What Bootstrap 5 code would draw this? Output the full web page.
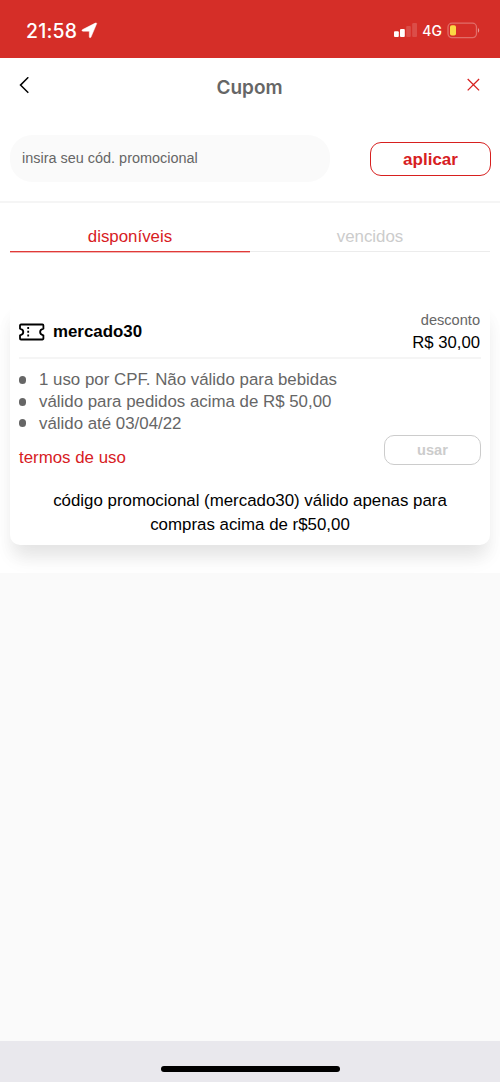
<!DOCTYPE html>
<html lang="pt-BR">
<head>
<meta charset="utf-8">
<meta name="viewport" content="width=device-width, initial-scale=1">
<title>Cupom</title>
<link href="https://cdn.jsdelivr.net/npm/bootstrap@5.3.0/dist/css/bootstrap.min.css" rel="stylesheet">
<style>
  body { font-family: "Liberation Sans", Arial, sans-serif; font-size: 16.87px; line-height: 21.8px; color: #000; background: #fafafa; height: 1082px; overflow: hidden; }
  .red { color: #d7201f; }
  .gray { color: #666; }
  .status { background: #d52e28; height: 58px; padding: 3px 20px 0 26px; font-family: Inter, sans-serif; color: #fff; }
  .clock { font-size: 19.4px; font-weight: 500; letter-spacing: .2px; padding-top: 2px; }
  .net { font-size: 14px; font-weight: 500; }
  .topbar { height: 77px; padding: 16px 20px 0 19px; }
  .topbar h1 { font: 600 19px/28px Inter, sans-serif; color: #666; padding-left: 3px; }
  .topbar svg { margin-top: 3px; }
  .promo { height: 68px; padding: 0 10px; border-bottom: 2px solid #f5f5f5; }
  .code-input.form-control { width: 320px; height: 47px; border: 0; border-radius: 22px; background: #fafafa; padding: 0 12px 1px; font-size: 14.45px; color: #666; }
  .code-input::placeholder { color: #666; opacity: 1; }
  .btn-apply { width: 121px; height: 34px; margin: 7px -1px 0 0; border: 1.5px solid #d7201f; border-radius: 11px; font-size: 17px; font-weight: 700; line-height: 32px; padding: 1px 0 0; color: #d7201f; }
  .tabs { height: 49px; margin: 0 10px; }
  .tabs .nav-link { padding: 23px 0 0; color: #ccc; border-bottom: 1px solid #ececec; border-radius: 0; transition: none; }
  .tabs .nav-link.active { color: #d7201f; border-bottom-color: #e03a38; box-shadow: 0 1px #f4b5b4; }
  .coupon { margin: 50px 10px 28px; height: 243px; padding: 8px 9px 0; border-radius: 10px; background: #fff; box-shadow: 0 16px 20px -4px rgba(0,0,0,.08), 0 12px 16px rgba(0,0,0,.035); }
  .coupon-head { height: 49px; border-bottom: 2px solid #f5f5f5; padding-right: 1px; }
  .code-group { padding-bottom: 3px; }
  .code-name { font-weight: 700; margin-left: 8px; }
  .value-label { font-size: 14.6px; }
  .value { font-size: 16.7px; }
  .rules { padding-top: 10px; }
  .rules li { display: flex; align-items: center; }
  .rules li::before { content: ""; width: 7px; height: 8px; border-radius: 4px; background: #666; margin-right: 13px; }
  .terms a { padding-top: 12.6px; }
  .btn-use { width: 97px; height: 30px; margin-top: 1px; border: 1px solid #ccc; border-radius: 10px; font-size: 14.6px; font-weight: 700; line-height: 29px; color: #ccc; padding: 0; }
  .note { line-height: 24px; margin-top: 20.4px; }
  .homebar { height: 41px; background: #e9e8ed; padding-bottom: 10px; }
  .homebar span { width: 179px; height: 6px; background: #000; }
</style>
</head>
<body class="d-flex flex-column">
<header class="status d-flex align-items-center justify-content-between">
  <div class="d-flex align-items-center">
    <span class="clock">21:58</span>
    <svg class="ms-1" width="17" height="17" viewBox="0 0 17 17"><path d="M15.600 1.800 10 15.100c-.5 1-1.700.7-1.700-.3V9.200H2c-1.200 0-1.400-1.200-.3-1.700L14.300 1.100c1-.4 1.600-.2 1.300.7Z" fill="#fff" stroke="#fff" stroke-width=".5"/></svg>
  </div>
  <div class="d-flex align-items-center">
    <svg width="24" height="15" viewBox="0 0 24 15" fill="#fff"><rect x="0" y="8.200" width="4.800" height="5.700" rx="1"/><rect x="6" y="5.900" width="4.800" height="8" rx="1"/><g opacity=".15"><rect x="12.200" y="2.900" width="4.600" height="11" rx="1"/><rect x="18.200" y="0" width="4.800" height="13.900" rx="1"/></g></svg>
    <span class="net ms-1">4G</span>
    <svg class="ms-1" width="34" height="17" viewBox="0 0 34 17"><rect x="2" y="1.200" width="28.500" height="14.400" rx="4" fill="none" stroke="#fff" stroke-opacity=".3" stroke-width="1.300"/><path d="M32 6c1.600.8 1.600 4 0 4.800Z" fill="#fff" opacity=".5"/><rect x="4" y="3.300" width="6" height="10.200" rx="1.800" fill="#fbd744"/></svg>
  </div>
</header>

<main class="bg-white">
  <div class="topbar d-flex justify-content-between">
    <svg width="11" height="18" viewBox="0 0 11 18" fill="none" stroke="#000" stroke-width="1.500"><path d="M9.300.3 1.500 8.100 9.300 15.800"/></svg>
    <h1 class="mb-0">Cupom</h1>
    <svg width="14" height="14" viewBox="0 0 14 14" fill="none" stroke="#d7201f" stroke-width="1.300"><path d="m1.700 2 11.400 11.400m0-11.400-11.400 11.400"/></svg>
  </div>
  <div class="promo d-flex justify-content-between align-items-start">
    <input class="form-control code-input" type="text" placeholder="insira seu cód. promocional" aria-label="Código promocional">
    <button class="btn btn-apply" type="button">aplicar</button>
  </div>
  <ul class="tabs nav nav-fill">
    <li class="nav-item w-50"><a class="nav-link active h-100" href="#">disponíveis</a></li>
    <li class="nav-item w-50"><a class="nav-link h-100" href="#">vencidos</a></li>
  </ul>
  <section class="coupon">
    <div class="coupon-head d-flex justify-content-between">
      <div class="code-group d-flex align-items-center">
        <svg width="26" height="18" viewBox="0 0 26 18" fill="none" stroke="#000" stroke-width="1.800" stroke-linejoin="round"><path d="M2 1.500h21.400a1 1 0 0 1 1 1v3.200c-4.400 1.100-4.400 5.500 0 6.600v3.200a1 1 0 0 1-1 1H2a1 1 0 0 1-1-1v-3.200c4.400-1.100 4.400-5.500 0-6.600V2.500a1 1 0 0 1 1-1Z"/><path d="M9.200 4v11" stroke-dasharray="2 1.800"/></svg>
        <span class="code-name">mercado30</span>
      </div>
      <div class="text-end">
        <div class="gray value-label">desconto</div>
        <div class="value">R$ 30,00</div>
      </div>
    </div>
    <ul class="rules list-unstyled gray mb-0">
      <li>1 uso por CPF. Não válido para bebidas</li>
      <li>válido para pedidos acima de R$ 50,00</li>
      <li>válido até 03/04/22</li>
    </ul>
    <div class="d-flex justify-content-between terms">
      <a class="red text-decoration-none" href="#">termos de uso</a>
      <button class="btn btn-use" type="button">usar</button>
    </div>
    <p class="note text-center mb-0">código promocional (mercado30) válido apenas para<br>compras acima de r$50,00</p>
  </section>
  <div style="height:.1px"></div>
</main>

<footer class="homebar mt-auto d-flex align-items-end justify-content-center"><span class="rounded-pill"></span></footer>
</body>
</html>
